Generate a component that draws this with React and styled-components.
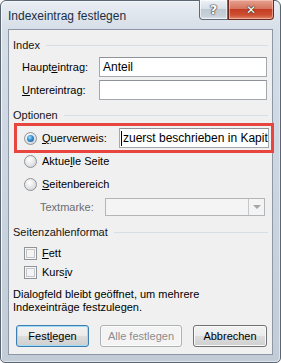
import React from 'react';
import styled, { createGlobalStyle } from 'styled-components';

const Global = createGlobalStyle`
  html, body {
    margin: 0;
    padding: 0;
    background: #ffffff;
  }
  body {
    font-family: 'Liberation Sans', Arial, sans-serif;
    font-size: 11px;
    color: #000;
  }
`;

const Window = styled.div`
  box-sizing: border-box;
  width: 281px;
  height: 363px;
  border: 1px solid #5b6672;
  border-radius: 6px 6px 5px 5px;
  background: linear-gradient(to bottom, #e9eef3 0px, #d6dee7 28px, #c9d3de 60%, #c2ccd7 100%);
  box-shadow: inset 1px 1px 0 #f4f7fa, inset -1px -1px 0 #dfe5eb;
  display: flex;
  flex-direction: column;
  padding: 0 7px 7px 7px;
`;

const TitleBar = styled.div`
  height: 28px;
  display: flex;
  align-items: flex-start;
  justify-content: space-between;
`;

const Title = styled.div`
  margin-top: 8px;
  font-size: 12px;
  color: #1b2e46;
  white-space: nowrap;
`;

const Caption = styled.div`
  display: flex;
  margin-top: -1px;
  margin-right: -1px;
`;

const CapButton = styled.div`
  box-sizing: border-box;
  height: 20px;
  width: ${p => p.$w}px;
  border: 1px solid ${p => (p.$close ? '#6b2b22' : '#5e6b78')};
  border-top: none;
  border-radius: ${p => (p.$close ? '0 0 4px 0' : '0 0 0 4px')};
  background: ${p =>
    p.$close
      ? 'linear-gradient(to bottom, #e6a191 0%, #d67660 45%, #c43d23 50%, #cf5034 80%, #e08a6a 100%)'
      : 'linear-gradient(to bottom, #eef2f6 0%, #d9e0e8 45%, #bfc9d4 50%, #c8d1db 85%, #dfe5ec 100%)'};
  box-shadow: inset 0 0 0 1px ${p => (p.$close ? 'rgba(255,210,200,0.55)' : 'rgba(255,255,255,0.6)')};
  display: flex;
  align-items: center;
  justify-content: center;
  font-family: 'DejaVu Sans', sans-serif;
  font-weight: bold;
  font-size: ${p => (p.$close ? 12 : 13)}px;
  color: #ffffff;
  text-shadow: 0 0 1px #2b2b2b, 0 0 1px #2b2b2b, 0 0 2px #555;
  line-height: 1;
`;

const Client = styled.div`
  flex: 1;
  border: 1px solid #8c98a5;
  background: #f0f0f0;
  padding: 7px 4px 0 4px;
  display: flex;
  flex-direction: column;
`;

const GroupHeader = styled.div`
  height: 16px;
  margin-top: ${p => p.$mt || 0}px;
  display: flex;
  align-items: center;
  color: #151515;
  white-space: nowrap;
  &::after {
    content: '';
    flex: 1;
    height: 1px;
    margin-left: 6px;
    margin-top: 1px;
    background: #d5dfe5;
  }
`;

const FieldRow = styled.div`
  height: ${p => p.$h || 20}px;
  margin-top: ${p => p.$mt || 0}px;
  display: flex;
  align-items: center;
`;

const FieldLabel = styled.div`
  width: 77px;
  padding-left: 9px;
  white-space: nowrap;
`;

const TextBox = styled.div`
  box-sizing: border-box;
  width: ${p => p.$w}px;
  height: 20px;
  border: 1px solid #a3a8ae;
  border-top-color: #8e9399;
  background: #fff;
  padding: 0 ${p => p.$pad ?? 3}px;
  display: flex;
  align-items: center;
  overflow: hidden;
  white-space: nowrap;
  font-size: 12px;
  color: #000;
`;

const Caret = styled.span`
  border-left: 1px solid #000;
  padding-left: 1px;
  line-height: 15px;
`;

const Highlight = styled.div`
  box-sizing: border-box;
  height: 30px;
  margin: 0 -6px 0 1px;
  border: 3px solid #e8453e;
  display: flex;
  align-items: center;
  padding-left: 7px;
`;

const RadioLabel = styled.span`
  width: ${p => p.$w}px;
  white-space: nowrap;
`;

const OptionRow = styled.div`
  height: 16px;
  margin-top: ${p => p.$mt || 0}px;
  display: flex;
  align-items: center;
  padding-left: ${p => p.$pl ?? 11}px;
  white-space: nowrap;
  color: ${p => (p.$disabled ? '#6d6d6d' : '#000')};
`;

const Radio = styled.span`
  box-sizing: border-box;
  width: 13px;
  height: 13px;
  border-radius: 50%;
  border: 1px solid #8f9499;
  background: radial-gradient(circle at 40% 35%, #ffffff 0%, #e9e9e9 45%, #c9cbce 100%);
  margin-right: 5px;
  display: flex;
  align-items: center;
  justify-content: center;
  flex: none;
  &::after {
    content: '';
    display: ${p => (p.$checked ? 'block' : 'none')};
    width: 7px;
    height: 7px;
    border-radius: 50%;
    background: radial-gradient(circle at 40% 35%, #a8e2ff 0%, #3a95d8 40%, #0e4f8f 100%);
  }
`;

const Check = styled.span`
  box-sizing: border-box;
  width: 13px;
  height: 13px;
  border: 1px solid #8f9499;
  background: #f4f4f4;
  box-shadow: inset 0 0 0 1px #f7f7f7, inset 0 0 0 2px #c4c6c9;
  margin-right: 5px;
  flex: none;
`;

const Combo = styled.div`
  box-sizing: border-box;
  width: 160px;
  height: 18px;
  border: 1px solid #b3b6b9;
  background: #f4f4f4;
  display: flex;
  justify-content: flex-end;
`;

const ComboArrow = styled.div`
  width: 15px;
  border-left: 1px solid #c5c8cb;
  display: flex;
  align-items: center;
  justify-content: center;
  &::after {
    content: '';
    border-left: 4px solid transparent;
    border-right: 4px solid transparent;
    border-top: 4px solid #a6a6a6;
  }
`;

const Note = styled.div`
  margin-top: 8px;
  line-height: 13px;
  color: #000;
`;

const ButtonRow = styled.div`
  margin-top: 11px;
  display: flex;
  padding-left: 3px;
  gap: 11px;
`;

const Button = styled.div`
  box-sizing: border-box;
  width: ${p => p.$w}px;
  height: 22px;
  border-radius: 3px;
  border: 1px solid ${p => (p.$default ? '#3c7fb1' : p.$disabled ? '#adb2b5' : '#707070')};
  background: ${p =>
    p.$disabled
      ? '#f4f4f4'
      : 'linear-gradient(to bottom, #f2f2f2 0%, #ebebeb 49%, #dddddd 50%, #cfcfcf 100%)'};
  box-shadow: ${p => (p.$default ? 'inset 0 0 0 1px #9fdcf7' : 'inset 0 0 0 1px #fbfbfb')};
  display: flex;
  align-items: center;
  justify-content: center;
  color: ${p => (p.$disabled ? '#8c8c8c' : '#000')};
  white-space: nowrap;
`;

export default function App() {
  return (
    <>
      <Global />
      <Window>
        <TitleBar>
          <Title>Indexeintrag festlegen</Title>
          <Caption>
            <CapButton $w={29}>?</CapButton>
            <CapButton $w={46} $close>✕</CapButton>
          </Caption>
        </TitleBar>
        <Client>
          <GroupHeader>Index</GroupHeader>
          <FieldRow $mt={4}>
            <FieldLabel>Haupt<u>e</u>intrag:</FieldLabel>
            <TextBox $w={168}>Anteil</TextBox>
          </FieldRow>
          <FieldRow $mt={3}>
            <FieldLabel><u>U</u>ntereintrag:</FieldLabel>
            <TextBox $w={168} />
          </FieldRow>

          <GroupHeader $mt={7}>Optionen</GroupHeader>
          <Highlight>
            <Radio $checked />
            <RadioLabel $w={77}><u>Q</u>uerverweis:</RadioLabel>
            <TextBox $w={150} $pad={1}>
              <Caret>zuerst beschrieben in Kapitel 3</Caret>
            </TextBox>
          </Highlight>
          <OptionRow>
            <Radio />
            Aktue<u>l</u>le Seite
          </OptionRow>
          <OptionRow $mt={7}>
            <Radio />
            <u>S</u>eitenbereich
          </OptionRow>
          <FieldRow $mt={6} $h={18}>
            <OptionRow $disabled $pl={27}>
              <RadioLabel $w={65}>Textmarke:</RadioLabel>
            </OptionRow>
            <Combo>
              <ComboArrow />
            </Combo>
          </FieldRow>

          <GroupHeader $mt={8}>Seitenzahlenformat</GroupHeader>
          <OptionRow $mt={5}>
            <Check />
            <u>F</u>ett
          </OptionRow>
          <OptionRow $mt={3}>
            <Check />
            Kurs<u>i</u>v
          </OptionRow>

          <Note>
            Dialogfeld bleibt geöffnet, um mehrere
            <br />
            Indexeinträge festzulegen.
          </Note>

          <ButtonRow>
            <Button $w={73} $default>Fest<u>l</u>egen</Button>
            <Button $w={82} $disabled>Alle festlegen</Button>
            <Button $w={74}>Abbrechen</Button>
          </ButtonRow>
        </Client>
      </Window>
    </>
  );
}
